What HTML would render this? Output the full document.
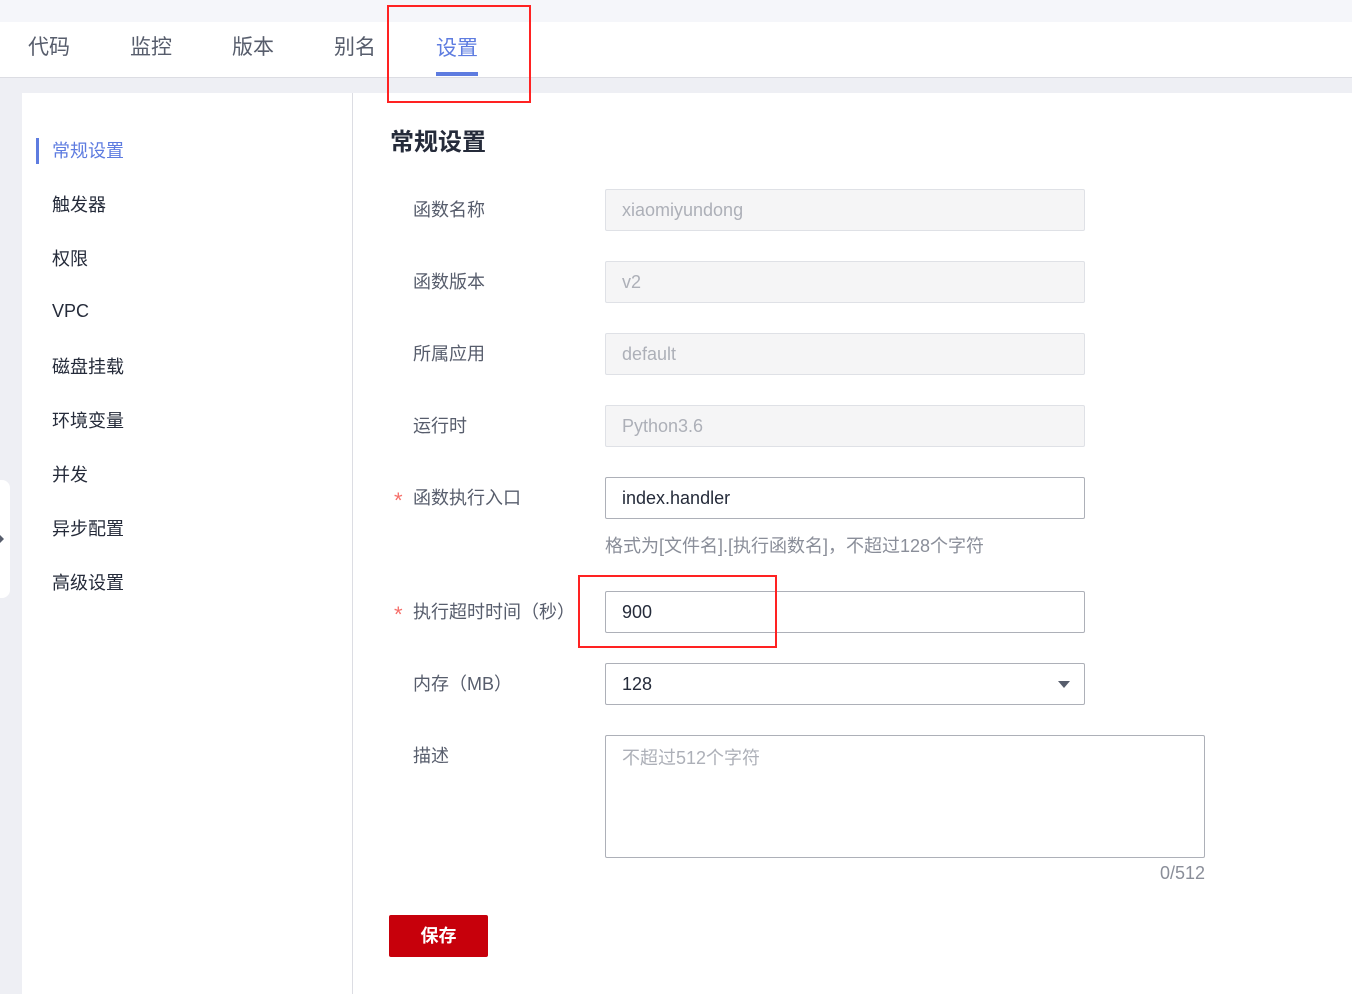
<!DOCTYPE html>
<html><head><meta charset="utf-8"><style>
*{box-sizing:border-box;margin:0;padding:0}
body{width:1352px;height:994px;overflow:hidden;background:#eeeff4;font-family:"Liberation Sans","Noto Sans CJK SC",sans-serif;position:relative;color:#252b3a}
.top{position:absolute;left:0;top:0;width:1352px;height:22px;background:#f5f6fa}
.tabs{position:absolute;left:0;top:22px;width:1352px;height:56px;background:#fff;border-bottom:1px solid #dcdde3}
.tab{position:absolute;top:9px;font-size:21px;color:#575d6c}
.tab.on{color:#5e7ce0}
.ul{position:absolute;left:436px;top:72px;width:42px;height:4px;background:#5e7ce0}
.red{position:absolute;border:2px solid #f22;}
.left{position:absolute;left:22px;top:93px;width:330px;height:901px;background:#fff}
.div{position:absolute;left:352px;top:93px;width:1px;height:901px;background:#dcdde3}
.right{position:absolute;left:353px;top:93px;width:999px;height:901px;background:#fff}
.mi{position:absolute;left:52px;font-size:18px;color:#252b3a}
.bar{position:absolute;left:36px;top:138px;width:3px;height:26px;background:#5e7ce0}
h2{position:absolute;left:390px;top:122px;font-size:24px;font-weight:bold;color:#252b3a}
.lb{position:absolute;left:413px;font-size:18px;color:#575d6c}
.st{position:absolute;left:394px;color:#f66f6a;font-size:22px;line-height:1}
.in{position:absolute;left:605px;width:480px;height:42px;border:1px solid #adb0b8;border-radius:2px;padding:0 16px;line-height:40px;font-size:18px;color:#252b3a}
.in.dis{background:#f5f5f6;border-color:#dfe1e6;color:#adb0b8}
.tri{position:absolute;right:14px;top:17px;border-left:6px solid transparent;border-right:6px solid transparent;border-top:7px solid #575d6c}
</style></head><body>
<div class="top"></div>
<div class="tabs">
<span class="tab" style="left:28px">代码</span>
<span class="tab" style="left:130px">监控</span>
<span class="tab" style="left:232px">版本</span>
<span class="tab" style="left:334px">别名</span>
<span class="tab on" style="left:436px;top:10px">设置</span>
</div>
<div class="ul"></div>
<div class="left"></div>
<div class="div"></div>
<div class="right"></div>
<div style="position:absolute;left:0;top:480px;width:10px;height:118px;background:#fff;border-radius:0 8px 8px 0"></div>
<div style="position:absolute;left:0;top:535px;border-top:4px solid transparent;border-bottom:4px solid transparent;border-left:4px solid #575d6c"></div>
<div class="red" style="left:387px;top:5px;width:144px;height:98px"></div>
<div class="bar"></div>
<span class="mi" style="top:137px;color:#5e7ce0">常规设置</span>
<span class="mi" style="top:191px">触发器</span>
<span class="mi" style="top:245px">权限</span>
<span class="mi" style="top:301px">VPC</span>
<span class="mi" style="top:353px">磁盘挂载</span>
<span class="mi" style="top:407px">环境变量</span>
<span class="mi" style="top:461px">并发</span>
<span class="mi" style="top:515px">异步配置</span>
<span class="mi" style="top:569px">高级设置</span>
<h2>常规设置</h2>
<span class="lb" style="top:196px">函数名称</span>
<div class="in dis" style="top:189px">xiaomiyundong</div>
<span class="lb" style="top:268px">函数版本</span>
<div class="in dis" style="top:261px">v2</div>
<span class="lb" style="top:340px">所属应用</span>
<div class="in dis" style="top:333px">default</div>
<span class="lb" style="top:412px">运行时</span>
<div class="in dis" style="top:405px">Python3.6</div>
<span class="st" style="top:490px">*</span><span class="lb" style="top:484px">函数执行入口</span>
<div class="in" style="top:477px">index.handler</div>
<span style="position:absolute;left:605px;top:532px;font-size:18px;color:#8a8e99">格式为[文件名].[执行函数名]，不超过128个字符</span>
<span class="st" style="top:604px">*</span><span class="lb" style="top:598px">执行超时时间（秒）</span>
<div class="in" style="top:591px">900</div>
<div class="red" style="left:578px;top:575px;width:199px;height:73px"></div>
<span class="lb" style="top:670px">内存（MB）</span>
<div class="in" style="top:663px">128<div class="tri"></div></div>
<span class="lb" style="top:742px">描述</span>
<div class="in" style="top:735px;width:600px;height:123px;line-height:44px;color:#adb0b8">不超过512个字符</div>
<span style="position:absolute;left:1160px;top:863px;font-size:18px;color:#8a8e99">0/512</span>
<div style="position:absolute;left:389px;top:915px;width:99px;height:42px;background:#c7000b;border-radius:2px;color:#fff;font-size:18px;font-weight:bold;text-align:center;line-height:42px">保存</div>
</body></html>
